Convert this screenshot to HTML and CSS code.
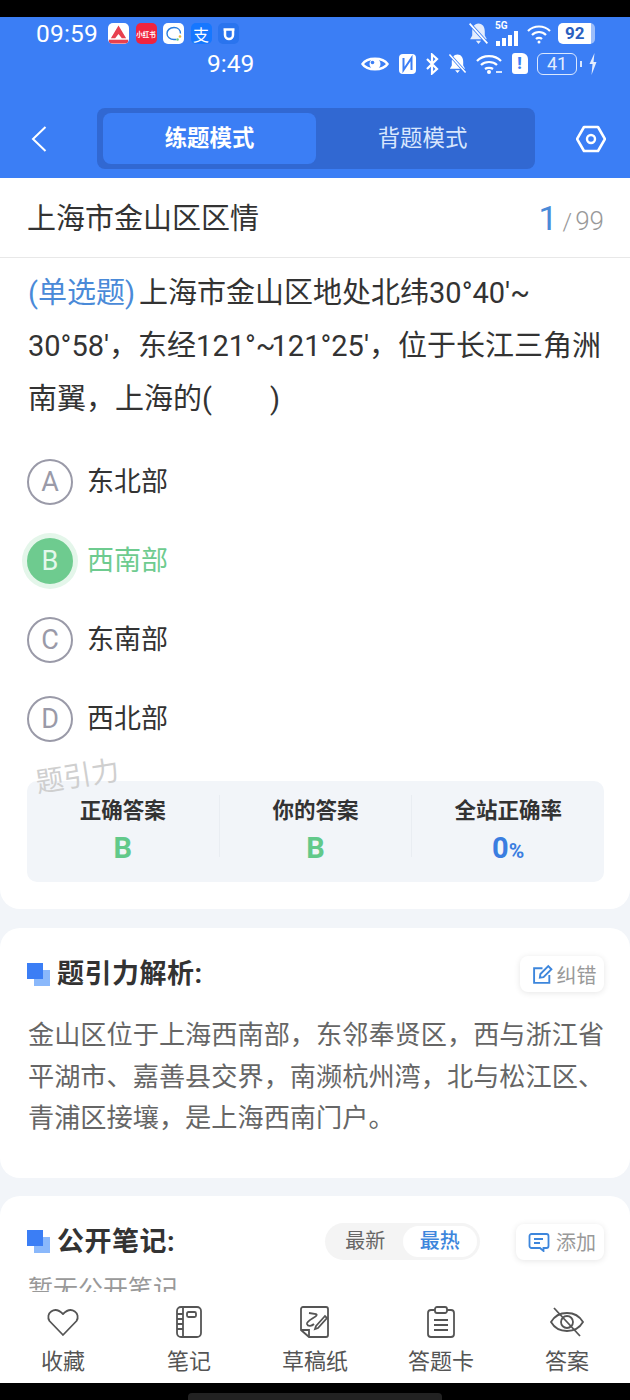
FILE: index.html
```html
<!DOCTYPE html>
<html lang="zh-CN">
<head>
  <meta charset="UTF-8">
  <meta name="viewport" content="width=device-width, initial-scale=1">
  <title>上海市金山区区情</title>
  <link rel="stylesheet" href="styles.css">
</head>
<body>

  <div class="black-top"></div>

  <header>
    <div class="status-row">
      <span class="time-a">09:59</span>
      <span class="app app-a">
        <svg viewBox="0 0 22 22" width="22" height="22"><path d="M11 2 L19 15.500 H14.500 L11 11 L7.500 15.500 H3 Z" fill="#e8404f"/><rect x="1" y="17" width="20" height="4" fill="#e8404f"/></svg>
      </span>
      <span class="app app-red">小红书</span>
      <span class="app app-chat">
        <svg viewBox="0 0 20 20" width="20" height="20"><path d="M10 3.500 C5.500 3.500 3 6.500 3 9.500 C3 13 6 15.500 10 15.500 L12 15.500" fill="none" stroke="#2a7fe0" stroke-width="1.400"/><path d="M10 3.500 C14 3.500 16.500 6 16.500 9.500" fill="none" stroke="#2a7fe0" stroke-width="1.400"/><circle cx="16" cy="12.500" r="1.300" fill="#e9b53c"/><circle cx="13.500" cy="15.500" r="1.300" fill="#62c98a"/></svg>
      </span>
      <span class="app app-blue">支</span>
      <span class="app app-u">
        <svg viewBox="0 0 20 20" width="20" height="20"><path d="M6 5 V11 A4 4 0 0 0 14 11 V5 M4.500 5.500 H15.500" fill="none" stroke="#fff" stroke-width="2.500"/></svg>
      </span>
      <span class="status-right">
        <svg viewBox="0 0 20 22" width="21" height="23"><path d="M10 1.500 C6 1.500 4 5 4 9 V13 L2 16.500 H18 L16 13 V9 C16 5 14 1.500 10 1.500 Z M7.500 18 H12.500 L10 21 Z" fill="#e4edfd"/><path d="M1.500 1.500 L18.500 20.500" stroke="#3b7ef5" stroke-width="3.200"/><path d="M1.500 1.500 L18.500 20.500" stroke="#fff" stroke-width="1.600"/></svg>
        <span class="signal">
          <span class="five-g">5G</span>
          <svg viewBox="0 0 25 16" width="25" height="16"><rect x="1" y="10" width="4" height="5" fill="#fff"/><rect x="7" y="7" width="4" height="8" fill="#fff"/><rect x="13" y="4" width="4" height="11" fill="#fff"/><rect x="19" y="0" width="4" height="15" fill="#fff"/></svg>
        </span>
        <svg viewBox="0 0 26 22" width="26" height="22" fill="none" stroke="#fff" stroke-width="2.200"><path d="M2 8 C8 2 18 2 24 8"/><path d="M6 12 C10 8 16 8 20 12"/><path d="M10 16 C11.500 14.500 14.500 14.500 16 16"/><circle cx="13" cy="19" r="1.500" fill="#fff" stroke="none"/></svg>
        <span class="batt-solid">92</span>
      </span>
    </div>
    <div class="status-row status-low">
      <span class="time-b">9:49</span>
      <span class="status-right status-right-b">
        <svg viewBox="0 0 28 18" width="28" height="18"><path d="M1.500 9 C6 2 22 2 26.500 9 C22 16 6 16 1.500 9 Z" fill="none" stroke="#fff" stroke-width="2.400"/><circle cx="14" cy="9" r="5.500" fill="#fff"/><circle cx="11.500" cy="7.500" r="1.800" fill="#3b7ef5"/></svg>
        <svg viewBox="0 0 19 22" width="19" height="22"><rect x="1" y="1" width="17" height="20" rx="4" fill="#fff"/><path d="M5.500 5 V17 L13.500 5 V17" fill="none" stroke="#3b7ef5" stroke-width="2"/></svg>
        <svg viewBox="0 0 14 22" width="14" height="22" fill="none" stroke="#fff" stroke-width="2.200"><path d="M2 6 L12 16 L7 20.500 V1.500 L12 6 L2 16"/></svg>
        <svg viewBox="0 0 20 22" width="19" height="21"><path d="M10 1.500 C6 1.500 4 5 4 9 V13 L2 16.500 H18 L16 13 V9 C16 5 14 1.500 10 1.500 Z M7.500 18 H12.500 L10 21 Z" fill="#fff"/><path d="M1.500 1.500 L18.500 20.500" stroke="#3b7ef5" stroke-width="3.200"/><path d="M1.500 1.500 L18.500 20.500" stroke="#fff" stroke-width="1.600"/></svg>
        <svg viewBox="0 0 28 22" width="28" height="22" fill="none" stroke="#fff" stroke-width="2.200"><path d="M2 8 C8 1.500 20 1.500 26 8"/><path d="M6 12 C10 8 18 8 22 12"/><path d="M10 16 C12 14.500 16 14.500 18 16"/><circle cx="14" cy="19" r="2" fill="#fff" stroke="none"/><path d="M21 19 H27" stroke-width="1.600"/></svg>
        <span class="sim">!</span>
        <span class="batt-line">41</span>
        <span class="batt-tip"></span>
        <svg class="bolt" viewBox="0 0 10 24" width="10" height="24"><path d="M6.500 1 L1.500 12 H4.500 L3.500 23 L8.500 10 H5.500 Z" fill="#e4edfd"/></svg>
      </span>
    </div>
    <nav class="nav">
      <svg class="back" viewBox="0 0 16 26" width="16" height="26"><path d="M14.500 1 L2 13 L14.500 25" fill="none" stroke="#fff" stroke-width="2"/></svg>
      <div class="mode">
        <div class="mode-item active">练题模式</div>
        <div class="mode-item">背题模式</div>
      </div>
      <svg class="setting" viewBox="0 0 30 28" width="30" height="28"><path d="M8 2 H22 L29 14 L22 26 H8 L1 14 Z" fill="none" stroke="#fff" stroke-width="2.600" stroke-linejoin="round"/><circle cx="15" cy="14" r="4" fill="none" stroke="#fff" stroke-width="2.400"/></svg>
    </nav>
  </header>

  <main>
    <section class="card first">
      <div class="q-head">
        <h2>上海市金山区区情</h2>
        <div class="count"><b>1</b><i>/</i>99</div>
      </div>
      <p class="question"><span class="q-type">(单选题)</span>上海市金山区地处北纬30°40′<span class="tilde">~</span><br>30°58′，东经121°<span class="tilde">~</span>121°25′，位于长江三角洲<br>南翼，上海的(　　)</p>

      <ul class="options">
        <li><span class="letter">A</span><span class="opt-text">东北部</span></li>
        <li class="picked"><span class="letter">B</span><span class="opt-text">西南部</span></li>
        <li><span class="letter">C</span><span class="opt-text">东南部</span></li>
        <li><span class="letter">D</span><span class="opt-text">西北部</span></li>
      </ul>

      <div class="watermark">题引力</div>

      <div class="summary">
        <div class="sum-col">
          <div class="sum-label">正确答案</div>
          <div class="sum-value green">B</div>
        </div>
        <div class="sum-col">
          <div class="sum-label">你的答案</div>
          <div class="sum-value green">B</div>
        </div>
        <div class="sum-col">
          <div class="sum-label">全站正确率</div>
          <div class="sum-value blue">0<small>%</small></div>
        </div>
      </div>
    </section>

    <section class="card">
      <div class="sec-head">
        <span class="sec-icon"></span>
        <h3>题引力解析:</h3>
        <div class="chip">
          <svg viewBox="0 0 20 20" width="21" height="21" fill="none" stroke="#3d86dc" stroke-width="1.800"><path d="M16.500 10.500 V18 H2 V4 H10"/><path d="M7.500 13 L8 9.500 L15.500 2 L18.500 5 L11 12.500 Z"/></svg>
          纠错
        </div>
      </div>
      <p class="analysis">金山区位于上海西南部，东邻奉贤区，西与浙江省<br>平湖市、嘉善县交界，南濒杭州湾，北与松江区、<br>青浦区接壤，是上海西南门户。</p>
    </section>

    <section class="card">
      <div class="sec-head">
        <span class="sec-icon"></span>
        <h3>公开笔记:</h3>
        <div class="switch">
          <span>最新</span>
          <span class="on">最热</span>
        </div>
        <div class="chip chip-add">
          <svg viewBox="0 0 22 20" width="22" height="20" fill="none" stroke="#3d86dc" stroke-width="1.800"><path d="M3.500 2 H18.500 A2 2 0 0 1 20.500 4 V14 A2 2 0 0 1 18.500 16 H15.500 V19 L12 16 H3.500 A2 2 0 0 1 1.500 14 V4 A2 2 0 0 1 3.500 2 Z"/><path d="M6 7 H15 M6 11 H12"/></svg>
          添加
        </div>
      </div>
      <p class="empty">暂无公开笔记</p>
    </section>
  </main>

  <footer class="tabbar">
    <div class="tab">
      <svg viewBox="0 0 34 32" width="34" height="32" fill="none" stroke="#555" stroke-width="1.800"><path d="M17 29 L3.500 15 C-1 8 8 -1 17 8 C26 -1 35 8 30.500 15 Z" stroke-linejoin="round"/></svg>
      <span>收藏</span>
    </div>
    <div class="tab">
      <svg viewBox="0 0 34 32" width="34" height="32" fill="none" stroke="#555" stroke-width="1.800"><rect x="5" y="1" width="24" height="30" rx="4"/><path d="M11 1 V31 M5 8 H11 M5 13 H11 M5 18 H11 M5 23 H11"/><rect x="15" y="6" width="9" height="5" rx="1.500"/></svg>
      <span>笔记</span>
    </div>
    <div class="tab">
      <svg viewBox="0 0 34 32" width="34" height="32" fill="none" stroke="#555" stroke-width="1.800"><path d="M5 1 H28 A2 2 0 0 1 30 3 V29 A2 2 0 0 1 28 31 H11 L3 24 V3 A2 2 0 0 1 5 1 Z"/><path d="M3 24 H11 V31"/><path d="M11 7 L18 8 C22 10 8 14 9 18 C10 21 14 20 16 18"/><path d="M18 20 L27 10 L29 12 L20 22 L17 23 Z"/></svg>
      <span>草稿纸</span>
    </div>
    <div class="tab">
      <svg viewBox="0 0 34 32" width="34" height="32" fill="none" stroke="#555" stroke-width="1.800"><path d="M11 4 H7 A3 3 0 0 0 4 7 V28 A3 3 0 0 0 7 31 H27 A3 3 0 0 0 30 28 V7 A3 3 0 0 0 27 4 H23"/><rect x="11" y="1" width="12" height="6" rx="2"/><path d="M10 14 H24 M10 19 H24 M10 24 H24"/></svg>
      <span>答题卡</span>
    </div>
    <div class="tab">
      <svg viewBox="0 0 34 32" width="34" height="32" fill="none" stroke="#555" stroke-width="1.800"><path d="M1 16 C8 4 26 4 33 16 C26 28 8 28 1 16 Z"/><circle cx="17" cy="16" r="6"/><path d="M4 2 L30 30"/></svg>
      <span>答案</span>
    </div>
  </footer>

  <div class="black-bottom"><div class="handle"></div></div>

</body>
</html>
```

FILE: styles.css
```css
* {
  box-sizing: border-box;
}
html, body {
  margin: 0;
  padding: 0;
}
body {
  width: 630px;
  height: 1400px;
  display: flex;
  flex-direction: column;
  overflow: hidden;
  background: #f2f5f9;
  color: #333;
  font-family: Roboto, "Noto Sans CJK SC", sans-serif;
}
.black-top {
  height: 17px;
  background: #000;
  flex: none;
}
header {
  height: 161px;
  flex: none;
  background: #3b7ef5;
  color: #fff;
}
.status-row {
  height: 31px;
  padding: 2px 35px 0 36px;
  display: flex;
  align-items: center;
}
.status-low {
  height: 29px;
  padding: 2px 32px 0 207px;
}
.time-a {
  font-size: 24.5px;
  letter-spacing: 0.2px;
  margin-right: 10px;
}
.time-b {
  font-size: 24.5px;
}
.app {
  width: 21px;
  height: 21px;
  border-radius: 5px;
  margin-right: 6.5px;
  display: flex;
  align-items: center;
  justify-content: center;
  flex: none;
  overflow: hidden;
}
.app-a,
.app-chat {
  background: #fff;
}
.app-red {
  background: #f0243f;
  color: #fff;
  font-size: 6.5px;
  font-weight: 700;
  white-space: nowrap;
}
.app-blue {
  background: #1677ff;
  color: #fff;
  font-size: 16px;
}
.app-u {
  background: #2a74ee;
}
.status-right {
  margin-left: auto;
  display: flex;
  align-items: center;
  gap: 6px;
}
.status-right-b {
  gap: 8.5px;
}
.signal {
  position: relative;
  width: 25px;
  height: 26px;
  padding-top: 10px;
}
.five-g {
  position: absolute;
  left: 0;
  top: -1px;
  font-size: 10px;
  font-weight: 700;
}
.batt-solid {
  width: 37px;
  height: 21px;
  border-radius: 5px;
  background: linear-gradient(to right, #fff 90%, #9dbefa 90%);
  color: #2a5fc0;
  font-size: 17px;
  font-weight: 700;
  text-align: left;
  padding-left: 7px;
  line-height: 21px;
}
.sim {
  width: 16px;
  height: 21px;
  border-radius: 3px 6px 3px 3px;
  background: #fff;
  color: #3b7ef5;
  font-size: 16px;
  font-weight: 900;
  text-align: center;
  line-height: 21px;
}
.batt-line {
  width: 40px;
  height: 22px;
  margin-left: 1px;
  border: 1.5px solid #dbe8fe;
  border-radius: 6px;
  color: #e4edfd;
  font-size: 18px;
  text-align: center;
  line-height: 19px;
}
.batt-tip {
  width: 2px;
  height: 6px;
  margin-left: -6px;
  background: #dbe8fe;
}
.bolt {
  margin-left: -2px;
}
.nav {
  height: 61px;
  margin-top: 31px;
  display: flex;
  align-items: center;
  position: relative;
}
.back {
  margin-left: 31px;
  flex: none;
}
.mode {
  width: 438px;
  height: 61px;
  margin-left: 50px;
  padding: 5px 6px;
  background: #3168d2;
  border-radius: 8px;
  display: flex;
}
.mode-item {
  flex: 1;
  border-radius: 8px;
  text-align: center;
  font-size: 22.4px;
  line-height: 50px;
  color: #d8e6fd;
}
.mode-item.active {
  background: #3b7ef5;
  color: #fff;
  font-weight: 700;
}
.setting {
  margin-left: 41px;
  flex: none;
}
main {
  flex: 1;
  min-height: 0;
  overflow: hidden;
}
.card {
  background: #fff;
  border-radius: 20px;
  padding: 28px 26px 38px 27px;
  margin-bottom: 18px;
}
.card.first {
  position: relative;
  border-radius: 0 0 20px 20px;
  padding: 0 0 27px;
  margin-bottom: 19px;
}
.q-head {
  height: 80px;
  padding: 0 26px 0 28px;
  border-bottom: 1px solid #e8e8e8;
  display: flex;
  align-items: center;
  justify-content: space-between;
}
.q-head h2 {
  margin: 0 0 4px -1px;
  font-size: 29px;
  font-weight: 400;
}
.count {
  font-size: 26px;
  font-weight: 300;
  color: #999;
}
.count b {
  font-size: 34px;
  font-weight: 400;
  color: #4a8ad8;
}
.count i {
  font-style: normal;
  margin: 0 3px 0 5px;
  font-size: 24px;
}
.question {
  margin: 9px 0 0;
  padding-left: 28px;
  font-size: 29px;
  line-height: 53px;
  white-space: nowrap;
}
.q-type {
  color: #4a8ad8;
  margin-right: 4px;
}
.tilde {
  letter-spacing: -4px;
}
.options {
  list-style: none;
  margin: 16px 0 0;
  padding: 0 0 0 27px;
}
.options li {
  height: 79px;
  display: flex;
  align-items: center;
  font-size: 27px;
}
.opt-text {
  margin: 0 0 4px -1px;
}
.letter {
  width: 46px;
  height: 46px;
  margin-right: 15px;
  border: 2px solid #9a9aa8;
  border-radius: 50%;
  color: #9a9aa8;
  font-size: 27px;
  text-align: center;
  line-height: 43px;
}
.picked {
  color: #6ecb8f;
}
.picked .letter {
  background: #6ecb8f;
  border-color: #6ecb8f;
  color: #e4f8ec;
  box-shadow: 0 0 0 5px #e4f6ea;
}
.watermark {
  position: absolute;
  left: 35px;
  top: 576px;
  font-size: 28px;
  color: #cfcfcf;
  transform: rotate(-9deg);
}
.summary {
  width: 577px;
  height: 101px;
  margin: 23px 0 0 27px;
  padding-top: 14px;
  background: #f2f5f9;
  border-radius: 10px;
  display: flex;
}
.sum-col {
  flex: 1;
  height: 62px;
  text-align: center;
  border-right: 1px solid #e9edf2;
}
.sum-col:last-child {
  border-right: none;
}
.sum-label {
  font-size: 21.5px;
  font-weight: 700;
  line-height: 32px;
}
.sum-value {
  font-size: 29px;
  font-weight: 700;
  line-height: 42px;
}
.sum-value small {
  font-size: 21px;
}
.green {
  color: #62c98a;
}
.blue {
  color: #3a7de0;
}
.sec-head {
  height: 36px;
  display: flex;
  align-items: center;
}
.sec-icon {
  width: 23px;
  height: 23px;
  position: relative;
  flex: none;
  margin-right: 7px;
  background: linear-gradient(#8ab8fb, #8ab8fb) 7px 7px / 16px 16px no-repeat;
}
.sec-icon::before {
  content: "";
  position: absolute;
  left: 0;
  top: 0;
  width: 16px;
  height: 16px;
  background: #3b7ef5;
}
.sec-head h3 {
  margin: 0 0 5px;
  font-size: 27px;
  font-weight: 700;
  letter-spacing: 0.5px;
}
.chip {
  margin-left: auto;
  width: 84px;
  height: 36px;
  padding-left: 4px;
  border-radius: 8px;
  background: #fff;
  box-shadow: 0 1px 6px rgba(0, 0, 0, 0.1);
  display: flex;
  align-items: center;
  justify-content: center;
  gap: 4px;
  color: #999;
  font-size: 20px;
}
.chip-add {
  margin-left: 36px;
  width: 88px;
  gap: 6px;
}
.switch {
  margin-left: auto;
  width: 155px;
  height: 37px;
  padding: 3px;
  border-radius: 19px;
  background: #f4f4f4;
  display: flex;
  color: #666;
  font-size: 20px;
  line-height: 31px;
}
.switch span {
  flex: 1;
  text-align: center;
  border-radius: 16px;
}
.switch .on {
  background: #fff;
  color: #3d86dc;
  font-weight: 500;
}
.analysis {
  margin: 23px 0 0;
  padding-left: 1px;
  font-size: 26.2px;
  line-height: 41.5px;
  color: #666;
  white-space: nowrap;
}
.empty {
  margin: 15px 0 0;
  padding-left: 1px;
  font-size: 25px;
  line-height: 30px;
  color: #999;
}
.tabbar {
  height: 91px;
  flex: none;
  background: #fff;
  display: flex;
  padding-top: 14px;
}
.tab {
  flex: 1;
  display: flex;
  flex-direction: column;
  align-items: center;
  color: #555;
  font-size: 22px;
}
.tab svg {
  flex: none;
}
.tab span {
  margin-top: 9px;
  line-height: 30px;
}
.black-bottom {
  height: 17px;
  flex: none;
  background: #000;
  position: relative;
}
.handle {
  position: absolute;
  left: 188px;
  top: 10px;
  width: 254px;
  height: 7px;
  border-radius: 4px 4px 0 0;
  background: #222;
}
```
